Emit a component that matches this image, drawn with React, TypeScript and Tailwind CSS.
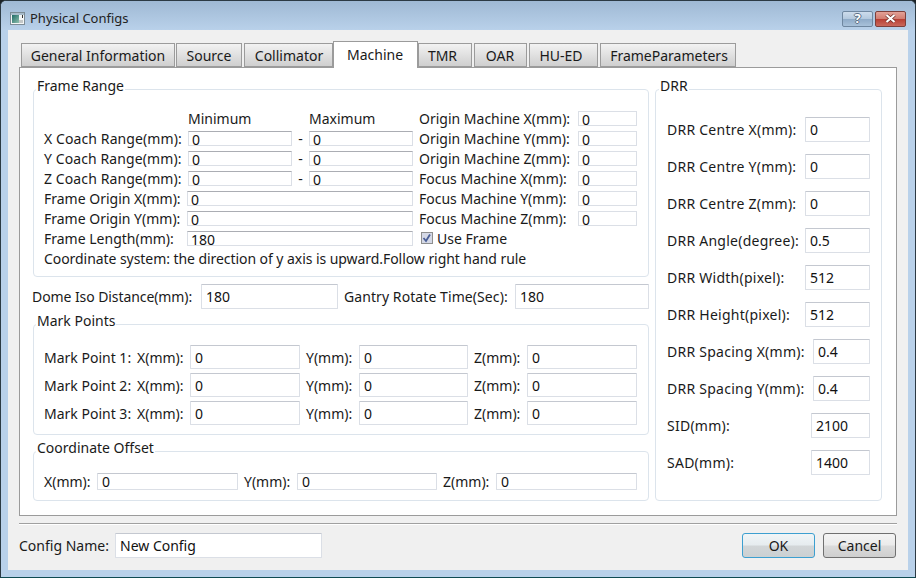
import React from 'react';

const Field = ({ value, className = '' }: { value: string; className?: string }) => (
    <input
        readOnly
        value={value}
        className={`border border-[#dbdfe6] border-t-[#c4c8d0] bg-white pl-[4px] text-[14px] text-[#111] outline-none rounded-[1px] min-w-0 ${className}`}
    />
);

const TinyField = ({ value, className = '' }: { value: string; className?: string }) => (
    <input
        readOnly
        value={value}
        className={`h-[15px] border border-[#dbdfe6] border-t-[#abadb3] bg-white pl-[3px] pt-[3px] text-[14px] leading-[14px] text-[#111] outline-none min-w-0 ${className}`}
    />
);

const Group = ({
    title,
    className = '',
    titleClass = 'ml-[2px]',
    children,
}: {
    title: string;
    className?: string;
    titleClass?: string;
    children: React.ReactNode;
}) => (
    <div className={`border border-[#dce4ec] rounded-[4px] ${className}`}>
        <div className={`-mt-[14px] w-fit bg-white px-[1px] h-[20px] leading-[20px] ${titleClass}`}>{title}</div>
        {children}
    </div>
);

const tabs = [
    { name: 'General Information', w: 'w-[154px]' },
    { name: 'Source', w: 'w-[66px] ml-[1px]' },
    { name: 'Collimator', w: 'w-[89px] ml-[2px] pl-[1px]' },
    { name: 'Machine', w: 'w-[85px] pr-[1px]', active: true },
    { name: 'TMR', w: 'w-[54px] pr-[5px]' },
    { name: 'OAR', w: 'w-[53px] ml-[2px] pr-[1px]' },
    { name: 'HU-ED', w: 'w-[69px] ml-[2px] pr-[5px]' },
    { name: 'FrameParameters', w: 'w-[136px] ml-[2px] pl-[2px]' },
];

const TabBar = () => (
    <div className="flex items-end h-[26px] pl-[2px]">
        {tabs.map((t) =>
            t.active ? (
                <div
                    key={t.name}
                    className={`${t.w} h-[27px] -mb-[1px] pb-[2px] z-10 flex items-center justify-center border border-b-0 border-[#9b9b9b] bg-white`}
                >
                    {t.name}
                </div>
            ) : (
                <div
                    key={t.name}
                    className={`${t.w} h-[24px] flex items-center justify-center border border-[#9b9b9b] bg-gradient-to-b from-[#f2f2f2] to-[#cfcfcf]`}
                >
                    {t.name}
                </div>
            ),
        )}
    </div>
);

const rightLabels = [
    'Origin Machine X(mm):',
    'Origin Machine Y(mm):',
    'Origin Machine Z(mm):',
    'Focus Machine X(mm):',
    'Focus Machine Y(mm):',
    'Focus Machine Z(mm):',
];

const FrameRange = () => (
    <Group title="Frame Range" className="h-[188px]">
        <div className="grid grid-cols-[144px_104px_17px_104px_165px_59px] auto-rows-[20px] items-center pl-[10px] pt-[12px] w-[605px]">
            <span />
            <span>Minimum</span>
            <span />
            <span>Maximum</span>
            <span className="pl-[6px] whitespace-nowrap">{rightLabels[0]}</span>
            <TinyField value="0" className="w-[59px] border-t-[#dbdfe6]" />

            {['X', 'Y', 'Z'].map((axis, i) => (
                <React.Fragment key={axis}>
                    <span className="tracking-[0.1px]">{axis} Coach Range(mm):</span>
                    <TinyField value="0" className="w-[104px]" />
                    <span className="text-center">-</span>
                    <TinyField value="0" className="w-[104px]" />
                    <span className="pl-[6px] whitespace-nowrap">{rightLabels[i + 1]}</span>
                    <TinyField value="0" className="w-[59px] border-t-[#dbdfe6]" />
                </React.Fragment>
            ))}

            {['Frame Origin X(mm):', 'Frame Origin Y(mm):'].map((label, i) => (
                <React.Fragment key={label}>
                    <span>{label}</span>
                    <TinyField value="0" className="col-span-3 -ml-[1px] w-[226px]" />
                    <span className="pl-[6px] whitespace-nowrap">{rightLabels[i + 4]}</span>
                    <TinyField value="0" className="w-[59px] border-t-[#dbdfe6]" />
                </React.Fragment>
            ))}

            <span>Frame Length(mm):</span>
            <TinyField value="180" className="col-span-3 -ml-[1px] w-[226px]" />
            <label className="col-span-2 pl-[8px] flex items-center gap-[4px]">
                <span className="w-[12px] h-[12px] border border-[#8e8f8f] bg-[#d5d9e6] flex items-center justify-center">
                    <svg width="10" height="10" viewBox="0 0 10 10">
                        <path d="M1.5 5 L4 8 L8 1.5" fill="none" stroke="#4a5f97" strokeWidth="1.8" />
                    </svg>
                </span>
                Use Frame
            </label>

            <span className="col-span-6 whitespace-nowrap tracking-[-0.06px]">
                Coordinate system: the direction of y axis is upward.Follow right hand rule
            </span>
        </div>
    </Group>
);

const MarkPoints = () => (
    <Group title="Mark Points" className="h-[111px]">
        <div className="pl-[10px] pt-[14px] flex flex-col gap-[4px]">
            {[1, 2, 3].map((n) => (
                <div key={n} className="flex items-center h-[24px]">
                    <span className="w-[93px]">Mark Point {n}:</span>
                    <span className="w-[53px]">X(mm):</span>
                    <Field value="0" className="w-[110px] h-[24px]" />
                    <span className="w-[59px] pl-[6px]">Y(mm):</span>
                    <Field value="0" className="w-[109px] h-[24px]" />
                    <span className="w-[59px] pl-[6px]">Z(mm):</span>
                    <Field value="0" className="w-[110px] h-[24px]" />
                </div>
            ))}
        </div>
    </Group>
);

const CoordinateOffset = () => (
    <Group title="Coordinate Offset" className="h-[50px]">
        <div className="pl-[10px] pt-[14px] flex items-center h-[19px] box-content">
            <span className="w-[53px]">X(mm):</span>
            <Field value="0" className="w-[141px] h-[17px]" />
            <span className="w-[59px] pl-[6px]">Y(mm):</span>
            <Field value="0" className="w-[140px] h-[17px]" />
            <span className="w-[59px] pl-[6px]">Z(mm):</span>
            <Field value="0" className="w-[141px] h-[17px]" />
        </div>
    </Group>
);

const drrRows = [
    { label: 'DRR Centre X(mm):', value: '0', w: 'w-[65px]' },
    { label: 'DRR Centre Y(mm):', value: '0', w: 'w-[65px]' },
    { label: 'DRR Centre Z(mm):', value: '0', w: 'w-[65px]' },
    { label: 'DRR Angle(degree):', value: '0.5', w: 'w-[65px]' },
    { label: 'DRR Width(pixel):', value: '512', w: 'w-[65px]' },
    { label: 'DRR Height(pixel):', value: '512', w: 'w-[65px]' },
    { label: 'DRR Spacing X(mm):', value: '0.4', w: 'w-[57px]' },
    { label: 'DRR Spacing Y(mm):', value: '0.4', w: 'w-[57px]' },
    { label: 'SID(mm):', value: '2100', w: 'w-[59px]' },
    { label: 'SAD(mm):', value: '1400', w: 'w-[59px]' },
];

const DrrGroup = () => (
    <Group title="DRR" className="w-[227px] h-[412px]" titleClass="ml-[3px]">
        <div className="flex flex-col gap-[12px] px-[11px] pt-[21px]">
            {drrRows.map((r) => (
                <div key={r.label} className="flex items-center justify-between h-[25px] whitespace-nowrap">
                    <span className="tracking-[0.25px]">{r.label}</span>
                    <Field value={r.value} className={`${r.w} h-[25px]`} />
                </div>
            ))}
        </div>
    </Group>
);

const WindowIcon = () => (
    <svg width="15" height="13" viewBox="0 0 15 13" className="shrink-0">
        <defs>
            <linearGradient id="winIconFill" x1="0" y1="0" x2="1" y2="1">
                <stop offset="0" stopColor="#1f6b66" />
                <stop offset="1" stopColor="#8fbfae" />
            </linearGradient>
        </defs>
        <rect x="0.5" y="0.5" width="14" height="12" fill="#f4f6f6" stroke="#7d8c96" />
        <rect x="1" y="1" width="13" height="2" fill="#a9bdcb" />
        <rect x="2" y="3" width="7" height="8" fill="url(#winIconFill)" />
        <rect x="9" y="8" width="4" height="3" fill="#c4c8c8" />
        <rect x="12" y="3" width="1" height="3" fill="#333" />
    </svg>
);

export default function App() {
    return (
        <div className="w-[916px] h-[578px] bg-[#1c2226]">
            <div className="w-[916px] h-[578px] flex flex-col border border-[#2c3a44] border-b-[#0f4a52] rounded-t-[6px] bg-[#b9d1ea] text-[14px] text-[#1a1a1a] font-['Noto_Sans',sans-serif] overflow-hidden">
                {/* title bar */}
                <div className="h-[29px] shrink-0 flex items-center pt-[6px] px-[9px] gap-[5px] bg-gradient-to-b from-[#9fb9d4] to-[#b9d1ea]">
                    <WindowIcon />
                    <span className="text-[13px] text-[#222]">Physical Configs</span>
                    <div className="ml-auto flex gap-[2px]">
                        <div className="w-[31px] h-[16px] flex items-center justify-center rounded-[2px] border border-[#6f87a0] bg-[linear-gradient(#cddcec_0%,#b4c9de_48%,#8fabc8_52%,#a8c1da_100%)] text-[13px] font-bold leading-none text-white [text-shadow:1px_0_#5b7086,-1px_0_#5b7086,0_1px_#5b7086,0_-1px_#5b7086]">
                            ?
                        </div>
                        <div className="w-[31px] h-[16px] flex items-center justify-center rounded-[2px] border border-[#7d3f3b] bg-[linear-gradient(#e3a197_0%,#d27d71_48%,#b83f34_52%,#c9685c_100%)]">
                            <svg width="15" height="11" viewBox="0 0 15 11">
                                <path d="M3.5 2 L11.5 9 M11.5 2 L3.5 9" stroke="#6b2a25" strokeWidth="3.6" />
                                <path d="M3.5 2 L11.5 9 M11.5 2 L3.5 9" stroke="#fff" strokeWidth="2.2" />
                            </svg>
                        </div>
                    </div>
                </div>

                {/* client area */}
                <div className="mx-[7px] mb-[7px] flex-1 bg-[#f0f0f0] px-[11px] pt-[11px] flex flex-col min-h-0">
                    <TabBar />
                    <div className="h-[449px] border border-[#9b9b9b] bg-white pl-[13px] pt-[21px] flex gap-[6px]">
                        <div className="w-[616px] flex flex-col">
                            <FrameRange />
                            <div className="flex items-center h-[25px] mt-[7px] -ml-[1px] whitespace-nowrap">
                                <span className="w-[169px] tracking-[-0.08px]">Dome Iso Distance(mm):</span>
                                <Field value="180" className="w-[137px] h-[25px]" />
                                <span className="w-[177px] pl-[6px] tracking-[0.08px]">Gantry Rotate Time(Sec):</span>
                                <Field value="180" className="w-[134px] h-[25px]" />
                            </div>
                            <div className="mt-[15px]">
                                <MarkPoints />
                            </div>
                            <div className="mt-[16px]">
                                <CoordinateOffset />
                            </div>
                        </div>
                        <DrrGroup />
                    </div>

                    <div className="mt-[7px] border-t border-[#a0a0a0] border-b border-b-white h-[2px]" />

                    <div className="flex items-center mt-[8px] h-[25px]">
                        <span className="w-[96px]">Config Name:</span>
                        <Field value="New Config" className="w-[207px] h-[25px] pl-[3px]" />
                        <button className="ml-auto w-[73px] h-[25px] rounded-[3px] border border-[#3c9fd0] bg-[linear-gradient(#f0f5f7_0%,#e6ecef_48%,#d2d6d8_52%,#cbd0d2_100%)]">
                            OK
                        </button>
                        <button className="ml-[8px] mr-[1px] w-[73px] h-[25px] rounded-[3px] border border-[#707070] bg-[linear-gradient(#f4f4f4_0%,#ebebeb_48%,#dbdbdb_52%,#cfcfcf_100%)]">
                            Cancel
                        </button>
                    </div>
                </div>
            </div>
        </div>
    );
}
